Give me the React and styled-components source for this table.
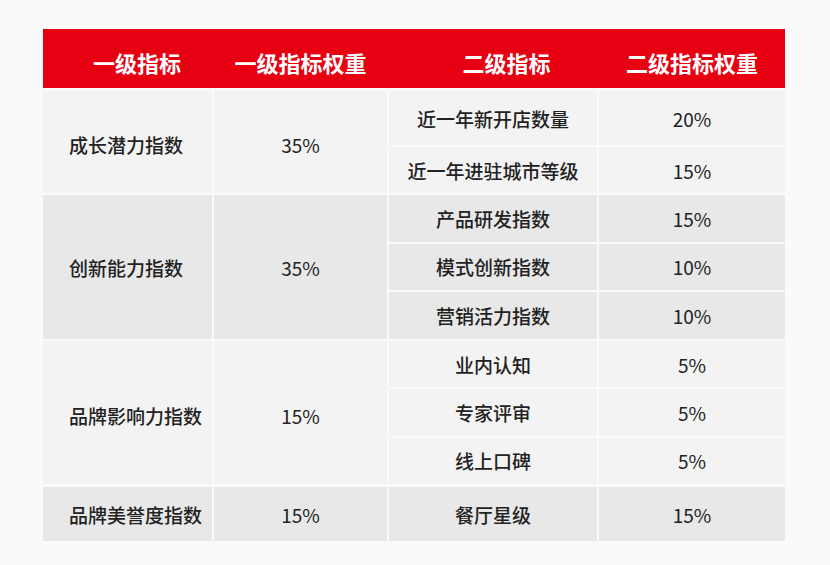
import React from "react";
import styled, { createGlobalStyle } from "styled-components";

const Global = createGlobalStyle`
  html, body { margin: 0; padding: 0; background: #fafafa; }
  body { font-family: "Noto Sans CJK SC", "Noto Sans", sans-serif; }
`;

const Page = styled.div`
  width: 830px;
  height: 565px;
  box-sizing: border-box;
  padding: 29px 45px 0 43px;
  background: #fafafa;
`;

const COLS = "169px 173px 208px 186px";

const Table = styled.div`
  display: flex;
  flex-direction: column;
  gap: 2px;
  width: 742px;
`;

const HeaderRow = styled.div`
  display: grid;
  grid-template-columns: ${COLS};
  column-gap: 2px;
  height: 59px;
  background: #e60012;
`;

const HeaderCell = styled.div`
  display: flex;
  align-items: center;
  justify-content: ${(p) => (p.$left ? "flex-start" : "center")};
  padding-left: ${(p) => p.$pad || 0}px;
  padding-top: 6px;
  box-sizing: border-box;
  color: #fff;
  font-size: 22px;
  font-weight: 700;
`;

const Group = styled.div`
  display: grid;
  grid-template-columns: ${COLS};
  grid-template-rows: ${(p) => p.$rows};
  gap: 2px;
  height: ${(p) => p.$h}px;
  margin-top: ${(p) => p.$mt || 0}px;
`;

const Cell = styled.div`
  display: flex;
  align-items: center;
  justify-content: ${(p) => (p.$left ? "flex-start" : "center")};
  padding-left: ${(p) => (p.$left ? 26 : 0)}px;
  padding-top: ${(p) => p.$pt || 0}px;
  grid-row: ${(p) => p.$span || "auto"};
  grid-column: ${(p) => p.$col};
  background: ${(p) => (p.$dark ? "#e8e8e8" : "#f3f3f3")};
  color: #222;
  font-size: 19px;
  font-weight: ${(p) => (p.$num ? 400 : 500)};
  box-sizing: border-box;
`;

const groups = [
  {
    name: "成长潜力指数",
    weight: "35%",
    dark: false,
    h: 102,
    mt: 1,
    pt: 5,
    rows: "54px 46px",
    subs: [
      ["近一年新开店数量", "20%"],
      ["近一年进驻城市等级", "15%"],
    ],
  },
  {
    name: "创新能力指数",
    weight: "35%",
    dark: true,
    h: 144,
    rows: "1fr 1fr 1fr",
    subs: [
      ["产品研发指数", "15%"],
      ["模式创新指数", "10%"],
      ["营销活力指数", "10%"],
    ],
  },
  {
    name: "品牌影响力指数",
    weight: "15%",
    dark: false,
    h: 143,
    pt: 6,
    rows: "1fr 1fr 1fr",
    subs: [
      ["业内认知", "5%"],
      ["专家评审", "5%"],
      ["线上口碑", "5%"],
    ],
  },
  {
    name: "品牌美誉度指数",
    weight: "15%",
    dark: true,
    h: 54,
    mt: 1,
    rows: "1fr",
    subs: [["餐厅星级", "15%"]],
  },
];

export default function App() {
  return (
    <Page>
      <Global />
      <Table>
        <HeaderRow>
          <HeaderCell $left $pad={50}>一级指标</HeaderCell>
          <HeaderCell>一级指标权重</HeaderCell>
          <HeaderCell $pad={27}>二级指标</HeaderCell>
          <HeaderCell>二级指标权重</HeaderCell>
        </HeaderRow>
        {groups.map((g) => {
          const span = `1 / span ${g.subs.length}`;
          return (
            <Group key={g.name} $rows={g.rows} $h={g.h} $mt={g.mt}>
              <Cell $left $dark={g.dark} $span={span} $col={1} $pt={g.pt}>
                {g.name}
              </Cell>
              <Cell $num $dark={g.dark} $span={span} $col={2} $pt={g.pt}>
                {g.weight}
              </Cell>
              {g.subs.map(([n, w]) => (
                <React.Fragment key={n}>
                  <Cell $dark={g.dark} $col={3}>{n}</Cell>
                  <Cell $num $dark={g.dark} $col={4}>{w}</Cell>
                </React.Fragment>
              ))}
            </Group>
          );
        })}
      </Table>
    </Page>
  );
}
